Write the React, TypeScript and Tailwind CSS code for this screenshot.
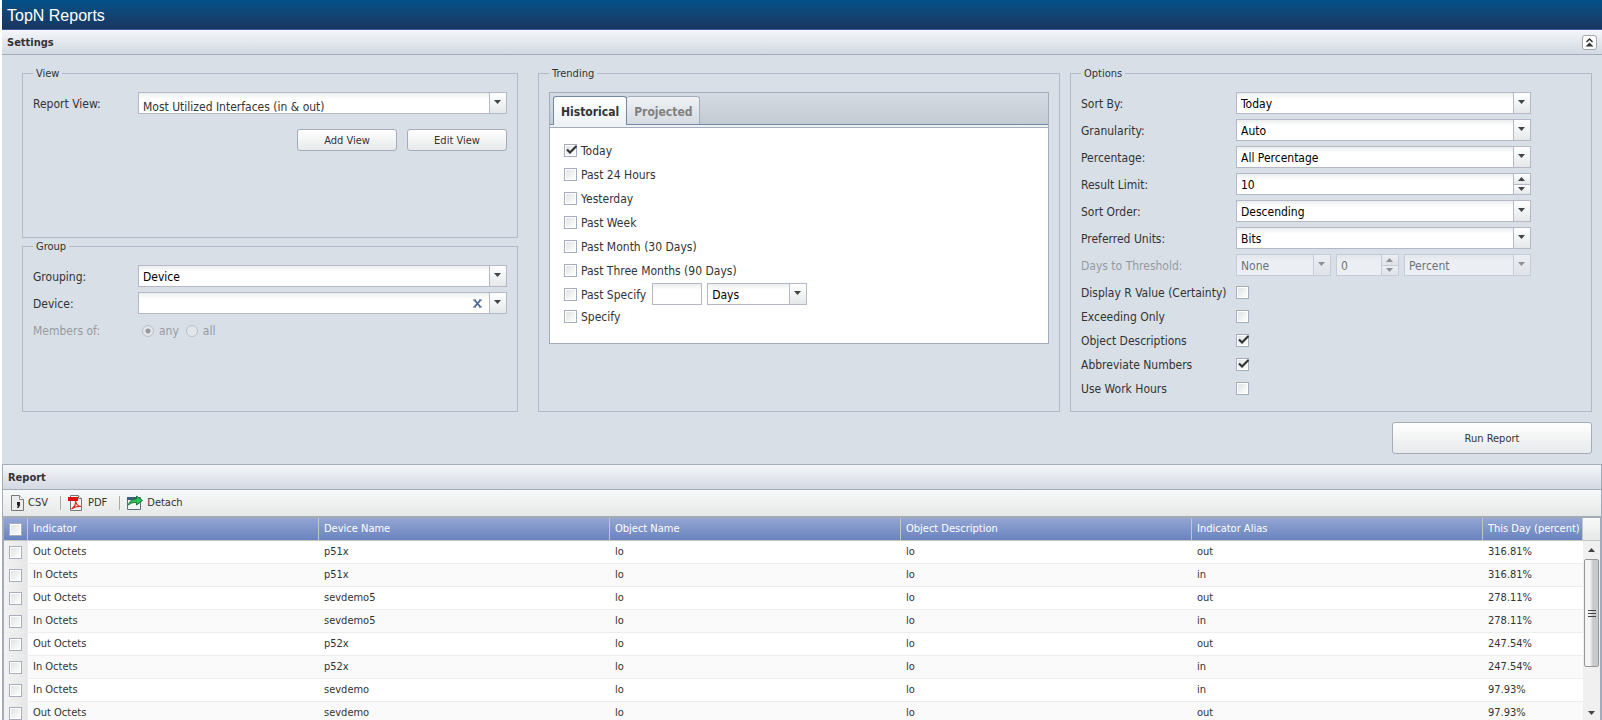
import { useId, type ReactNode } from "react";

const FONT = "font-['DejaVu_Sans_Condensed','Noto_Sans',sans-serif]";

function Arrow({ up = false }: { up?: boolean }) {
  return (
    <svg width="7" height="4" viewBox="0 0 7 4" aria-hidden="true" className="shrink-0">
      <path d={up ? "M0 4 3.5 0 7 4z" : "M0 0h7L3.5 4z"} fill="#444" />
    </svg>
  );
}

function Combo({ id, label, value, disabled, clearable, className = "", textClass = "pt-px text-black" }: {
  id?: string; label?: string; value: string; disabled?: boolean; clearable?: boolean; className?: string; textClass?: string;
}) {
  return (
    <div className={`flex h-[22px] border border-[#b5b8c8] bg-linear-to-b from-[#eceeee] to-white to-30% ${disabled ? "opacity-50" : ""} ${className}`}>
      <div className="relative min-w-0 flex-1">
        <select id={id} aria-label={label} disabled={disabled} defaultValue={value}
          className={`h-5 w-full appearance-none bg-transparent pr-5 pl-1 text-[12px] leading-5 outline-none ${textClass}`}>
          <option value={value}>{value}</option>
        </select>
        {clearable && (
          <button type="button" aria-label="Clear device" className="absolute top-1 right-1.5 flex size-3 items-center justify-center">
            <svg width="9" height="9" viewBox="0 0 9 9" aria-hidden="true">
              <path d="M1.500 1 7.500 8M7.500 1 1.500 8" stroke="#4a6a96" strokeWidth="1.900" />
              <path d="M0 1h3M6 1h3M0 8h3M6 8h3" stroke="#4a6a96" />
            </svg>
          </button>
        )}
      </div>
      <div className="pointer-events-none flex w-[17px] justify-center border-l border-[#b5b8c8] bg-linear-to-b from-white to-[#e6e8e8] pt-[7px] pr-px">
        <Arrow />
      </div>
    </div>
  );
}

function Spinner({ id, label, value, disabled, className = "" }: {
  id?: string; label?: string; value: string; disabled?: boolean; className?: string;
}) {
  return (
    <div className={`flex h-[22px] border border-[#b5b8c8] bg-linear-to-b from-[#eceeee] to-white to-30% ${disabled ? "opacity-50" : ""} ${className}`}>
      <input id={id} aria-label={label} defaultValue={value} disabled={disabled}
        className="h-5 w-full min-w-0 flex-1 bg-transparent px-1 pt-px text-[12px] leading-5 text-black outline-none" />
      <div className="flex w-[17px] flex-col border-l border-[#b5b8c8]">
        <button type="button" aria-label="Increase" disabled={disabled} className="flex flex-1 items-center justify-center border-b border-[#b5b8c8] bg-linear-to-b from-white to-[#e6e8e8] pr-px"><Arrow up /></button>
        <button type="button" aria-label="Decrease" disabled={disabled} className="flex flex-1 items-center justify-center bg-linear-to-b from-white to-[#e6e8e8] pr-px"><Arrow /></button>
      </div>
    </div>
  );
}

function Check({ id, label, checked }: { id?: string; label?: string; checked?: boolean }) {
  return (
    <span className="relative flex size-[13px] shrink-0">
      <input id={id} aria-label={label} type="checkbox" defaultChecked={checked}
        className="peer size-[13px] appearance-none border border-[#a8adbd] bg-linear-to-br from-[#dfe2e2] to-white shadow-[inset_0_0_0_1px_#fff]" />
      <svg viewBox="0 0 13 13" aria-hidden="true" className="pointer-events-none absolute inset-0 hidden size-[13px] peer-checked:block">
        <path d="M3 5.500 6 8.500 12.500 2" fill="none" stroke="#333" strokeWidth="2.200" />
      </svg>
    </span>
  );
}

function Group({ title, className = "", children }: { title: string; className?: string; children: ReactNode }) {
  return (
    <fieldset className={`min-w-0 border border-[#b5b8c8] px-2.5 ${className}`}>
      <legend className="px-[3px] pt-0.5 text-[11px] leading-[14px]">{title}</legend>
      {children}
    </fieldset>
  );
}

function Row({ label, wide, disabled, children }: { label: string; wide?: boolean; disabled?: boolean; children: (id: string) => ReactNode }) {
  const id = useId();
  return (
    <div className="flex h-[22px] items-center">
      <label htmlFor={id} className={`shrink-0 pt-0.5 whitespace-nowrap ${wide ? "w-[155px]" : "w-[105px]"} ${disabled ? "opacity-40" : ""}`}>{label}</label>
      {children(id)}
    </div>
  );
}

const BTN = "rounded-[3px] border border-[#a4abbb] bg-linear-to-b from-white to-[#e7e9ea] pt-0.5 text-[11px]";

function CsvIcon() {
  return (
    <svg width="13" height="16" viewBox="0 0 13 16" aria-hidden="true">
      <path d="M.5.5h8l4 4v11H.5z" fill="#ececec" stroke="#777" />
      <path d="M8.500.5v4h4" fill="#fff" stroke="#888" />
      <path d="M6 7h3v3.500L7.500 13H6l1-2.500H6z" fill="#222" />
    </svg>
  );
}

function PdfIcon() {
  return (
    <svg width="15" height="16" viewBox="0 0 15 16" aria-hidden="true">
      <path d="M2.500.5h8l3 3v12h-11z" fill="#f1f1f1" stroke="#777" />
      <path d="M10.500.5v3h3" fill="#fff" stroke="#777" />
      <path d="M0 2h10v4H0z" fill="#e0100d" />
      <path d="M3.500 14c3-2 4.500-5 4-8 .5 3 2 5 5.500 5.500-4-.5-6.500.5-9.500 2.500z" fill="none" stroke="#d92a22" strokeWidth="1.200" />
    </svg>
  );
}

function DetachIcon() {
  return (
    <svg width="16" height="16" viewBox="0 0 16 16" aria-hidden="true">
      <path d="M.5 2.500h13v12H.5z" fill="#f3f6f9" stroke="#5b6f84" />
      <path d="M0 2h9v3H0z" fill="#3d5f7d" />
      <path d="M1.500 10c.5-4 4-6 8-6V1l6 4.500-6 4.500V7.500c-3 0-5.500 0-8 2.500z" fill="#2fc258" stroke="#0e6b2a" strokeWidth=".9" />
    </svg>
  );
}

const PERIODS = ["Today", "Past 24 Hours", "Yesterday", "Past Week", "Past Month (30 Days)", "Past Three Months (90 Days)"];
const OPTIONS = [["Sort By:", "Today"], ["Granularity:", "Auto"], ["Percentage:", "All Percentage"], ["Result Limit:", "10"], ["Sort Order:", "Descending"], ["Preferred Units:", "Bits"]];
const FLAGS: [string, boolean][] = [["Display R Value (Certainty)", false], ["Exceeding Only", false], ["Object Descriptions", true], ["Abbreviate Numbers", true], ["Use Work Hours", false]];
const COLUMNS = ["Indicator", "Device Name", "Object Name", "Object Description", "Indicator Alias", "This Day (percent)"];
const DATA = [
  ["Out Octets", "p51x", "lo", "lo", "out", "316.81%"],
  ["In Octets", "p51x", "lo", "lo", "in", "316.81%"],
  ["Out Octets", "sevdemo5", "lo", "lo", "out", "278.11%"],
  ["In Octets", "sevdemo5", "lo", "lo", "in", "278.11%"],
  ["Out Octets", "p52x", "lo", "lo", "out", "247.54%"],
  ["In Octets", "p52x", "lo", "lo", "in", "247.54%"],
  ["In Octets", "sevdemo", "lo", "lo", "in", "97.93%"],
  ["Out Octets", "sevdemo", "lo", "lo", "out", "97.93%"],
];

function CheckLine({ text, checked, className = "" }: { text: string; checked?: boolean; className?: string }) {
  return (
    <label className={`flex items-center gap-1 ${className}`}>
      <Check checked={checked} />
      <span className="pt-px">{text}</span>
    </label>
  );
}

function Trending() {
  return (
    <div className="mt-[11px] border border-[#a4abbb] bg-white">
      <div role="tablist" className="flex h-8 items-end border-b border-[#7389a5] bg-linear-to-b from-[#d5dbe2] to-[#c3cad2] pl-[3px] text-[12px] font-bold">
        <button type="button" role="tab" aria-selected="true" className="-mb-px h-[29px] rounded-t-[3px] border border-b-0 border-[#7389a5] bg-linear-to-b from-white to-[#eef2f5] px-[7px] pt-0.5 text-[#333]">Historical</button>
        <button type="button" role="tab" aria-selected="false" className="h-7 rounded-t-[3px] border border-b-0 border-l-0 border-[#a4abbb] bg-linear-to-b from-[#f0f2f5] to-[#d5dbe2] px-[7px] pt-0.5 text-[#808080]">Projected</button>
      </div>
      <div className="h-[3px] border-b border-[#a4abbb] bg-[#eef2f5]" />
      <div className="flex flex-col pt-2.5 pb-[17px] pl-3.5">
        {PERIODS.map((p, i) => <CheckLine key={p} text={p} checked={i === 0} className="h-6" />)}
        <div className="flex h-6 items-center">
          <CheckLine text="Past Specify" />
          <input aria-label="Number of periods" className="ml-1.5 h-[22px] w-[50px] border border-[#b5b8c8] bg-linear-to-b from-[#eceeee] to-white to-30% px-1 outline-none" />
          <Combo label="Period unit" value="Days" className="ml-[5px] w-[100px]" />
        </div>
        <CheckLine text="Specify" className="h-5" />
      </div>
    </div>
  );
}

export default function App() {
  return (
    <div className={`flex h-screen flex-col overflow-hidden bg-white pl-0.5 text-[12px] leading-4 text-[#333] ${FONT}`}>
      <h1 className="flex h-[30px] shrink-0 items-center border-b border-[#3f5d9a] bg-linear-to-b from-[#00528a] to-[#17365f] pt-0.5 pl-[5px] font-['Liberation_Sans',Arial,sans-serif] text-[16px] text-white">TopN Reports</h1>
      <div className="flex h-[25px] shrink-0 items-center justify-between border-b border-[#a4abbb] bg-linear-to-b from-[#f4f6f9] to-[#d3d9e2] pr-[5px] pl-[5px]">
        <h2 className="pt-px text-[11px] font-bold">Settings</h2>
        <button type="button" aria-label="Collapse settings" className="flex size-[15px] items-center justify-center rounded-[3px] border border-[#a4a7ae] bg-white">
          <svg width="9" height="9" viewBox="0 0 9 9" aria-hidden="true">
            <path d="M1.500 4 4.500 1 7.500 4" fill="none" stroke="#333" strokeWidth="1.500" />
            <path d="M.5 8.500 4.500 4.500 8.500 8.500z" fill="#333" />
          </svg>
        </button>
      </div>

      <section className="shrink-0 bg-[#d8dfe7] pt-2.5 pr-2.5 pb-2.5 pl-5">
        <div className="grid grid-cols-[506fr_522fr_522fr] gap-x-2.5">
          <div className="mr-2.5 flex flex-col">
            <Group title="View" className="h-[173px]">
              <div className="flex flex-col gap-[15px] pt-[11px]">
                <Row label="Report View:">{(id) => <Combo id={id} value="Most Utilized Interfaces (in & out)" className="flex-1" textClass="pt-1 text-[#333]" />}</Row>
                <div className="flex justify-end gap-2.5">
                  <button type="button" className={`h-[22px] w-[100px] ${BTN}`}>Add View</button>
                  <button type="button" className={`h-[22px] w-[100px] ${BTN}`}>Edit View</button>
                </div>
              </div>
            </Group>
            <Group title="Group" className="flex-1">
              <div className="flex flex-col gap-[5px] pt-[11px]">
                <Row label="Grouping:">{(id) => <Combo id={id} value="Device" className="flex-1" />}</Row>
                <Row label="Device:">{(id) => <Combo id={id} value="" clearable className="flex-1" />}</Row>
                <div role="radiogroup" aria-label="Members of" className="flex h-[22px] items-center pt-px opacity-40">
                  <span className="w-[109px]">Members of:</span>
                  {["any", "all"].map((m) => (
                    <label key={m} className="mr-[7px] flex items-center gap-[5px]">
                      <input type="radio" name="members" disabled defaultChecked={m === "any"}
                        className="size-3 appearance-none rounded-full border border-[#8a8f99] bg-[#f4f4f4] checked:bg-[radial-gradient(#333_2px,#f4f4f4_3px)]" />
                      {m}
                    </label>
                  ))}
                </div>
              </div>
            </Group>
          </div>
          <Group title="Trending"><Trending /></Group>
          <Group title="Options" className="pb-3">
            <div className="flex flex-col gap-[5px] pt-[11px] pr-[50px]">
              {OPTIONS.map(([label, value]) => (
                <Row key={label} label={label} wide>
                  {(id) => label === "Result Limit:" ? <Spinner id={id} value={value} className="flex-1" /> : <Combo id={id} value={value} className="flex-1" />}
                </Row>
              ))}
              <Row label="Days to Threshold:" wide disabled>
                {(id) => (
                  <div className="flex min-w-0 flex-1 gap-[5px]">
                    <Combo id={id} value="None" disabled className="w-[95px]" />
                    <Spinner label="Threshold value" value="0" disabled className="w-[63px]" />
                    <Combo label="Threshold unit" value="Percent" disabled className="flex-1" />
                  </div>
                )}
              </Row>
            </div>
            <div className="flex flex-col gap-0.5 pt-[5px]">
              {FLAGS.map(([label, on]) => <Row key={label} label={label} wide>{(id) => <Check id={id} checked={on} />}</Row>)}
            </div>
          </Group>
        </div>
        <div className="flex justify-end pt-2.5">
          <button type="button" className={`h-8 w-[200px] ${BTN}`}>Run Report</button>
        </div>
      </section>

      <section className="flex min-h-0 flex-1 flex-col border-x border-t border-[#a4abbb]">
        <h2 className="flex h-[25px] shrink-0 items-center border-b border-[#a4abbb] bg-linear-to-b from-[#f4f6f9] to-[#d3d9e2] pt-px pl-[5px] text-[11px] font-bold">Report</h2>
        <div className="flex h-7 shrink-0 items-center border-b-2 border-[#a4abb5] bg-linear-to-b from-[#f8f9f9] to-[#e6e7e7] pl-2 text-[11px]">
          <button type="button" className="flex items-center gap-1"><CsvIcon />CSV</button>
          <span className="mr-[7px] ml-3 h-3.5 w-px bg-[#aaa]" />
          <button type="button" className="flex items-center gap-[5px]"><PdfIcon />PDF</button>
          <span className="mr-[7px] ml-3 h-3.5 w-px bg-[#aaa]" />
          <button type="button" className="flex items-center gap-1"><DetachIcon />Detach</button>
        </div>
        <div className="flex min-h-0 flex-1 border-x border-[#a4abbb]">
          <div className="min-w-0 flex-1 overflow-hidden">
            <table className="w-full table-fixed border-separate border-spacing-0 text-left text-[11px] leading-[14px]">
              <colgroup>
                <col className="w-6" /><col /><col /><col /><col /><col /><col className="w-[100px]" />
              </colgroup>
              <thead>
                <tr className="h-[23px] bg-linear-to-b from-[#94a5d3] to-[#6882be] text-white">
                  <th className="border-r border-b border-[#c5c5c5] p-0 pl-[5px]"><Check label="Select all rows" /></th>
                  {COLUMNS.map((c) => <th key={c} className="border-r border-b border-[#c5c5c5] p-0 pl-[5px] font-normal whitespace-nowrap">{c}</th>)}
                </tr>
              </thead>
              <tbody>
                {DATA.map((row, i) => (
                  <tr key={i} className="h-[23px] even:bg-[#fafafa]">
                    <td className="border-r border-b border-[#ededed] bg-linear-to-r from-[#f3f3f3] to-[#e6e6e6] p-0 pl-[5px]"><Check label={`Select row ${i + 1}`} /></td>
                    {row.map((cell, j) => <td key={j} className="border-b border-[#ededed] p-0 pl-[5px]">{cell}</td>)}
                  </tr>
                ))}
              </tbody>
            </table>
          </div>
          <div className="flex w-[17px] shrink-0 flex-col bg-[#f0f0f0]">
            <div className="h-[23px] border-b border-[#c5c5c5] bg-linear-to-b from-[#f8f9f9] to-[#e6e7e7]" />
            <button type="button" aria-label="Scroll up" className="flex h-[18px] items-center justify-center"><Arrow up /></button>
            <div className="ml-px flex h-[108px] w-[15px] flex-col items-center justify-center gap-0.5 rounded-[2px] border border-[#979797] bg-linear-to-r from-[#f5f5f5] from-40% to-[#c9cacc] to-60%">
              <span className="h-px w-2 bg-[#444]" /><span className="h-px w-2 bg-[#444]" /><span className="h-px w-2 bg-[#444]" />
            </div>
            <button type="button" aria-label="Scroll down" className="mt-auto flex h-[15px] items-center justify-center"><Arrow /></button>
          </div>
        </div>
      </section>
    </div>
  );
}
